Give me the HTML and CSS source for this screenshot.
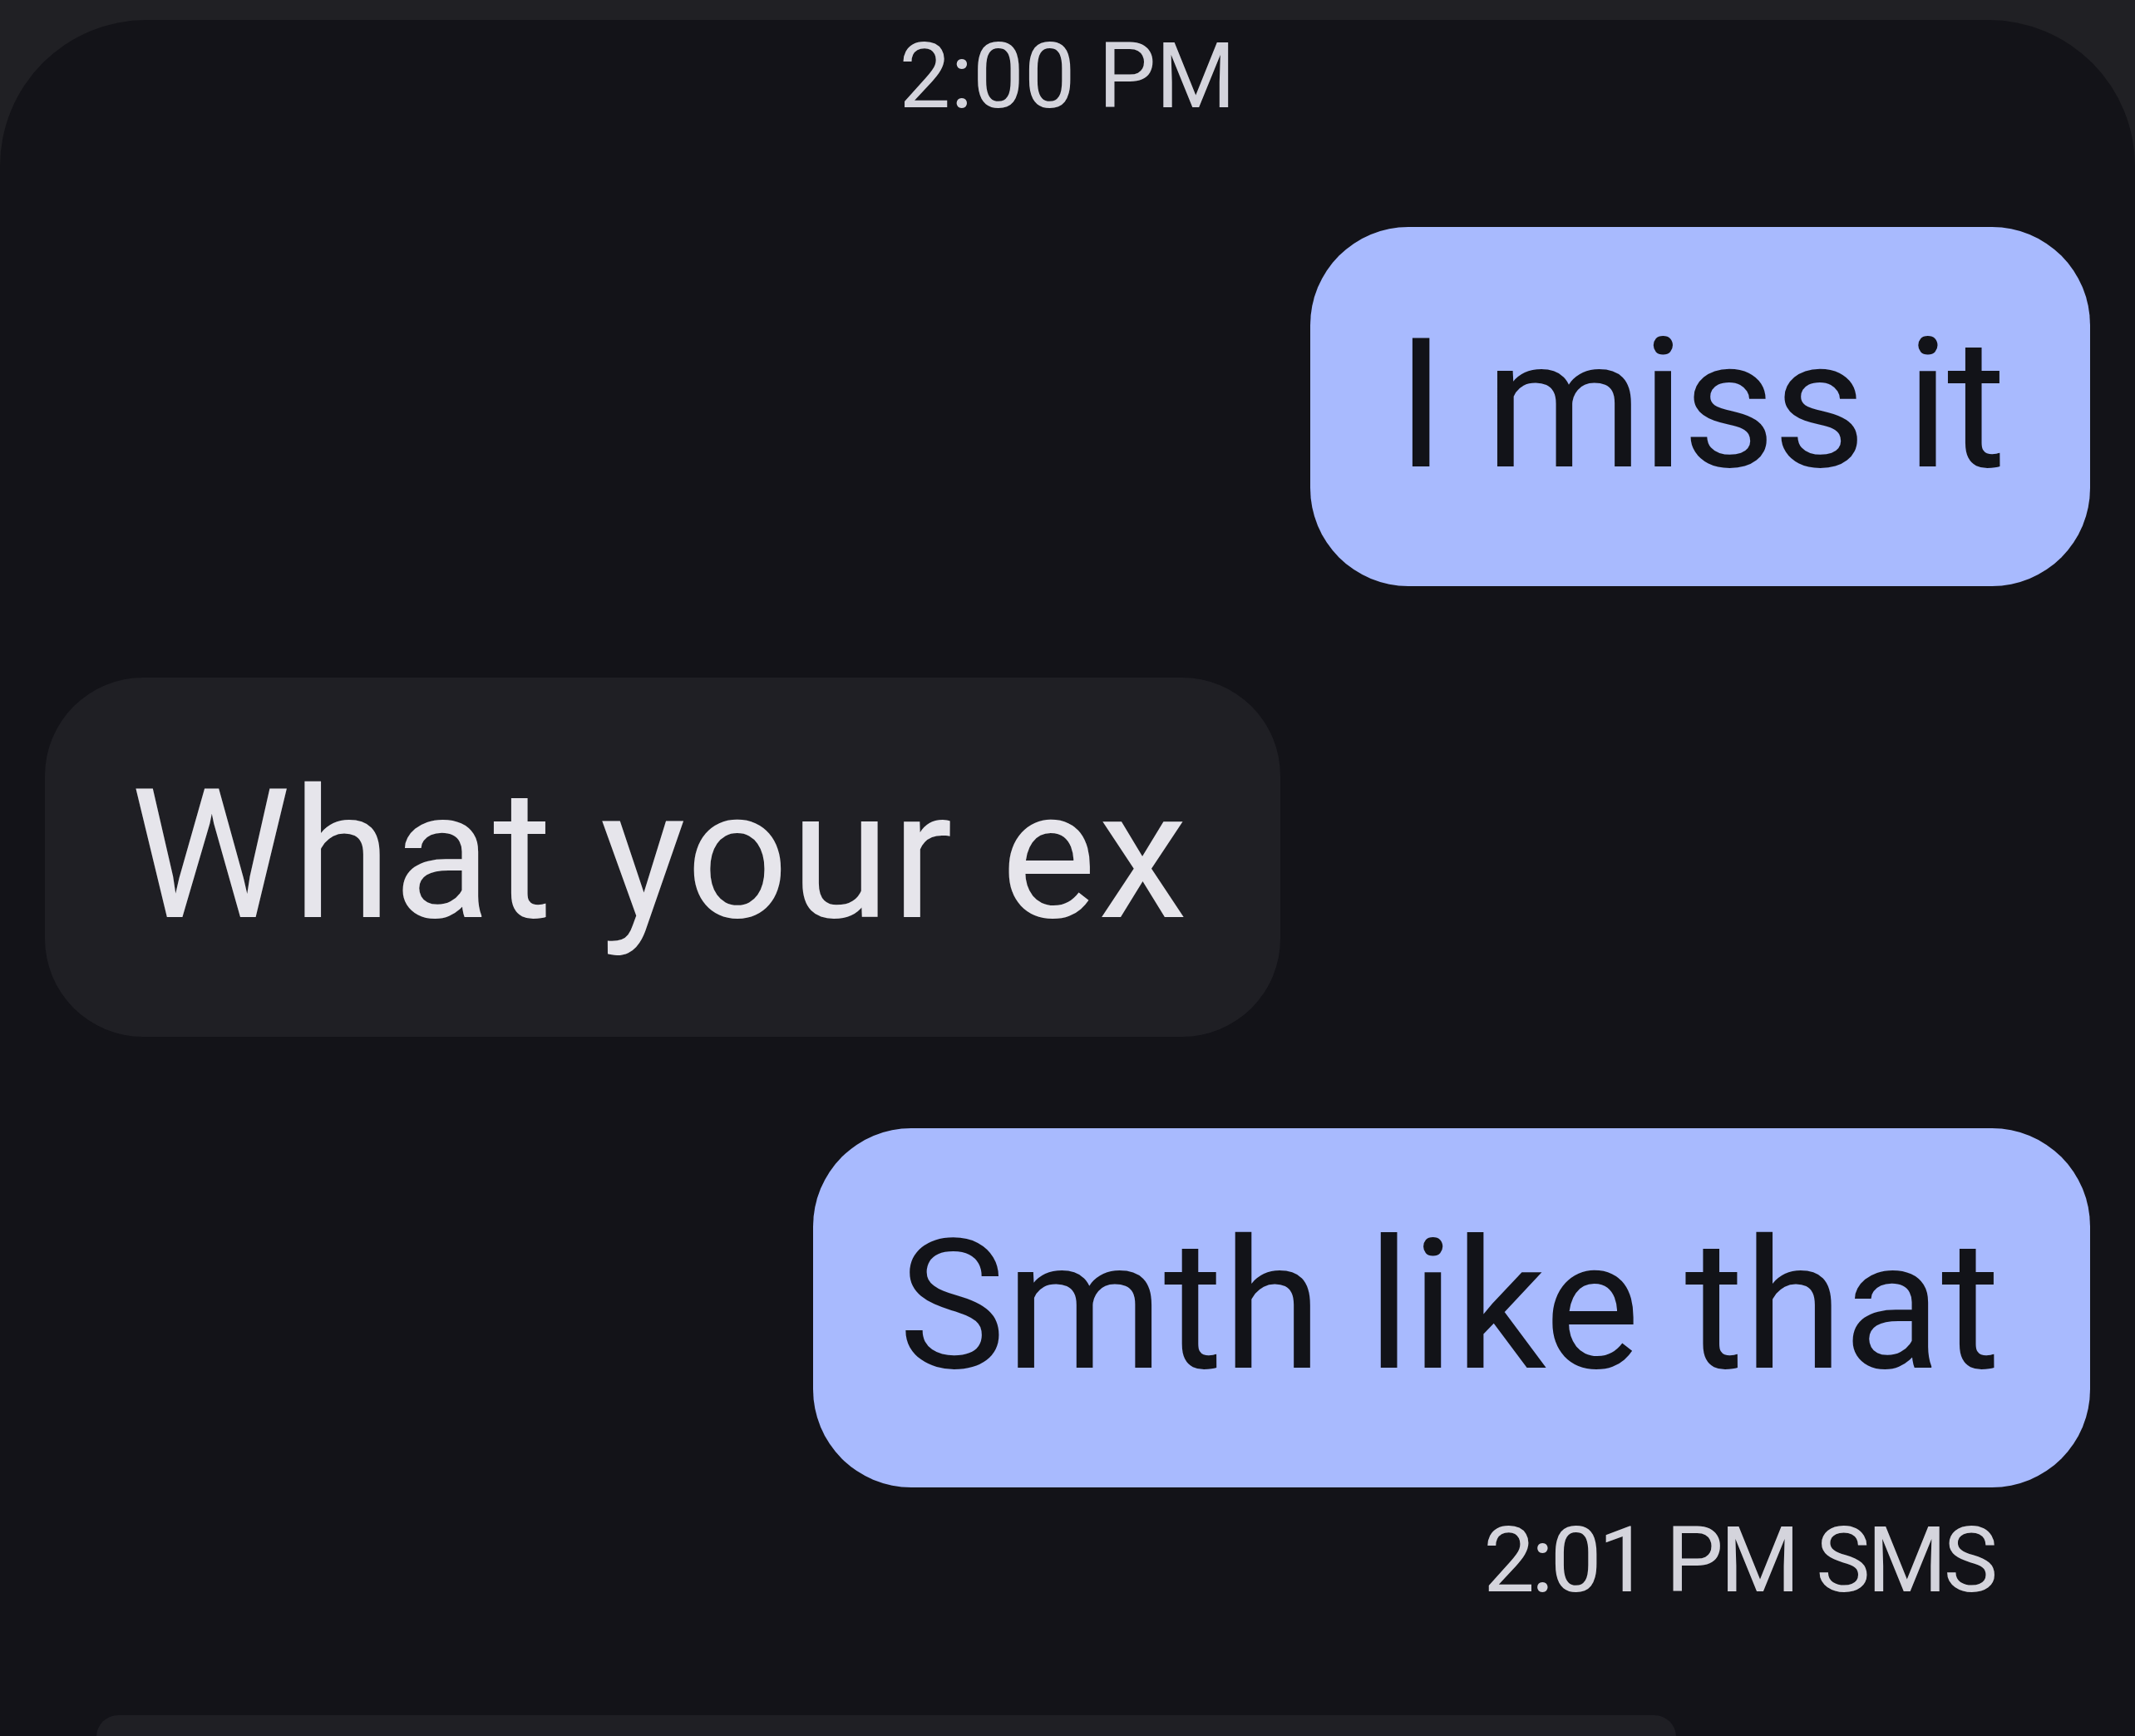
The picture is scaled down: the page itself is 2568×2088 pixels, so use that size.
FILE: index.html
```html
<!DOCTYPE html>
<html lang="en">
<head>
<meta charset="utf-8">
<title>Messages</title>
<link rel="stylesheet" href="styles.css">
</head>
<body>
<main class="panel">
  <div class="stamp stamp-center">2:00 PM</div>
  <div class="row row-out"><div class="bubble out bubble-1">I miss it</div></div>
  <div class="row row-in"><div class="bubble in bubble-2">What your ex</div></div>
  <div class="row row-out"><div class="bubble out bubble-3">Smth like that</div></div>
  <div class="stamp stamp-right">2:01 PM SMS</div>
  <div class="row row-next"><div class="bubble in next"></div></div>
</main>
</body>
</html>
```
FILE: styles.css
```css
html, body {
  margin: 0;
  padding: 0;
  background: #202024;
  height: 2088px;
  overflow: hidden;
}
body {
  font-family: Roboto, "Noto Sans", "Liberation Sans", sans-serif;
  padding-top: 24px;
  box-sizing: border-box;
}
.panel {
  background: #131318;
  border-radius: 176px 176px 0 0;
  height: 2064px;
  display: flex;
  flex-direction: column;
  padding: 13px 54px 0 54px;
  box-sizing: border-box;
  overflow: hidden;
}
.stamp {
  font-size: 110px;
  line-height: 110px;
  color: #d4d4dc;
}
.stamp-center {
  text-align: center;
  margin-bottom: 126px;
}
.stamp-right {
  text-align: right;
  padding-right: 115px;
  margin-top: 33px;
  margin-bottom: 131px;
  letter-spacing: -4px;
}
.row {
  display: flex;
}
.row-out { justify-content: flex-end; }
.row-in { justify-content: flex-start; }
.row-in, .row-in + .row-out { margin-top: 110px; }
.bubble {
  font-size: 217px;
  line-height: 217px;
  padding: 106px 108px 109px 103px;
  border-radius: 118px;
  white-space: nowrap;
}
.bubble-1 {
  padding-left: 104px;
  padding-right: 104px;
  letter-spacing: -3px;
}
.bubble-2 {
  padding-left: 103px;
  padding-right: 110px;
  letter-spacing: 2px;
}
.out {
  background: #a8bafe;
  color: #121318;
}
.in {
  background: #1f1f24;
  color: #e6e5eb;
}
.next {
  margin-left: 62px;
  width: 1900px;
  height: 26px;
  padding: 0;
  border-radius: 106px 106px 0 0;
}
```
